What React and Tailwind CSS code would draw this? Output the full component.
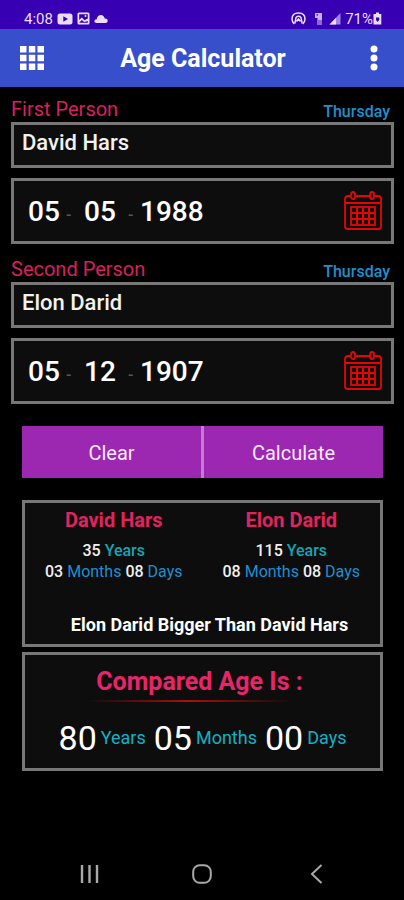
import { useState } from "react";

const emptyPerson = { name: "", day: "", month: "", year: "" };

function CalendarIcon() {
  return (
    <svg viewBox="0 0 38 40" className="w-[38px] h-10" fill="none" stroke="#e30606" strokeWidth="1.8">
      <path d="M6 5H4Q1 5 1 8V35Q1 38 4 38H34Q37 38 37 35V8Q37 5 34 5H31M12 5H26M1 12H37" />
      <rect x="7" y="1" width="4" height="7" rx="2" />
      <rect x="26" y="1" width="4" height="7" rx="2" />
      <rect x="7" y="16" width="24" height="18" />
      <path strokeWidth="2.2" d="M7 22H31M7 28H31M13 16V34M19 16V34M25 16V34" />
    </svg>
  );
}

function StatusBar() {
  return (
    <div className="flex items-center justify-between h-[29px] pt-2 pl-6 pr-[22px] bg-[#3700b3] text-[#e9defa]">
      <div className="flex items-center gap-1">
        <span className="text-[15px] leading-5">4:08</span>
        <svg viewBox="0 0 16 12" className="w-4 h-3" fill="currentColor">
          <path fillRule="evenodd" d="M3 .5H13Q15.5.5 15.5 3V9Q15.5 11.5 13 11.5H3Q.5 11.5.5 9V3Q.5.5 3 .5ZM6.3 3.3V8.7L11 6Z" />
        </svg>
        <svg viewBox="0 0 13 13" className="w-[13px] h-[13px]" fill="currentColor">
          <path fillRule="evenodd" d="M2 .5H11Q12.5.5 12.5 2V11Q12.5 12.5 11 12.5H2Q.5 12.5.5 11V2Q.5.5 2 .5ZM2.2 2.2V8L4.8 5.5L7.5 8.3L10.8 6.5V2.2ZM2.2 10.8H10.8V9L7.2 10L4.8 8Z" />
          <circle cx="8.5" cy="4" r="1" />
        </svg>
        <svg viewBox="0 0 14 10" className="w-[14px] h-[10px]" fill="currentColor">
          <path d="M2.5 9Q.3 9 .3 7.2T2.7 5.2Q3.5 1 7 1Q9.8 1 10.7 4.6Q13.7 4.6 13.7 7Q13.7 9 11.5 9Z" />
        </svg>
      </div>
      <div className="flex items-center">
        <svg viewBox="0 0 15 13" className="w-[15px] h-[13px] mr-2" fill="none" stroke="currentColor" strokeWidth="1.5">
          <path d="M3.2 11.8Q1 10 1 7Q1 1 7.5 1T14 7Q14 10 11.8 11.8" />
          <path d="M3.8 11.5L5 5.5Q7.5 3 10 5.5L11.2 11.5M5.5 9.5L7.5 7L9.5 9.5" />
        </svg>
        <svg viewBox="0 0 9 14" className="w-[9px] h-[14px] mr-1.5 opacity-80" fill="currentColor">
          <path fillRule="evenodd" d="M1 1H8V8H3.5V6H1ZM2.5 2.3V3.4H4V2.3Z" />
          <path d="M3 8H8V13H3Z" opacity=".6" />
        </svg>
        <svg viewBox="0 0 12 13" className="w-3 h-[13px] mr-1" fill="currentColor">
          <path d="M.5 12.5L11.5 1V12.5Z" opacity=".6" />
          <path d="M.5 12.5L7 5.7V12.5Z" />
        </svg>
        <span className="text-[15px] leading-5">71%</span>
        <svg viewBox="0 0 9 13" className="w-[9px] h-[13px]" fill="currentColor">
          <path fillRule="evenodd" d="M3 .5H6V2H8.3V12.5H.5V2H3ZM3 5.5V8L4.5 10L6.3 8V5.5Z" />
        </svg>
      </div>
    </div>
  );
}

function Header() {
  return (
    <header className="flex items-center justify-between h-[58px] pl-5 pr-[18px] bg-[#384fcb] text-white">
      <button aria-label="Apps">
        <svg viewBox="0 0 24 24" className="w-6 h-6" fill="currentColor">
          <path d="M0 0H6.5V6.5H0ZM8.8 0H15.3V6.5H8.8ZM17.5 0H24V6.5H17.5ZM0 8.8H6.5V15.3H0ZM8.8 8.8H15.3V15.3H8.8ZM17.5 8.8H24V15.3H17.5ZM0 17.5H6.5V24H0ZM8.8 17.5H15.3V24H8.8ZM17.5 17.5H24V24H17.5Z" />
        </svg>
      </button>
      <h1 className="pt-0.5 text-[25px] font-bold">Age Calculator</h1>
      <button aria-label="More options" className="w-6 flex justify-center">
        <svg viewBox="0 0 8 26" className="w-2 h-[26px]" fill="currentColor">
          <circle cx="4" cy="4" r="3.5" />
          <circle cx="4" cy="13" r="3.5" />
          <circle cx="4" cy="22" r="3.5" />
        </svg>
      </button>
    </header>
  );
}

function PersonForm({ id, label, weekday, person, onChange }) {
  const update = (field) => (e) => onChange({ ...person, [field]: e.target.value });

  return (
    <section>
      <div className="flex items-end justify-between pr-1 h-[27px]">
        <label htmlFor={`${id}-name`} className="text-xl leading-[26px] text-[#d81f5f]">{label}</label>
        <span className="text-base leading-5 font-medium text-[#1f8fd0]">{weekday}</span>
      </div>
      <input
        id={`${id}-name`}
        value={person.name}
        onChange={update("name")}
        className="block w-full h-[46px] px-2 pb-1.5 border-3 border-[#777] bg-[#0d0d0d] text-[22px] font-medium text-[#f2f2f2] focus:outline-none"
      />
      <div className="flex items-center h-[66px] mt-[10px] pl-[14px] pr-[9px] border-3 border-[#777] bg-[#0d0d0d] text-[28px] font-medium text-white">
        <input aria-label={`${label} day`} value={person.day} onChange={update("day")} maxLength={2} className="w-9 pt-0.5 focus:outline-none" />
        <span className="w-5 pt-2 pl-0.5 text-base text-[#555]">-</span>
        <input aria-label={`${label} month`} value={person.month} onChange={update("month")} maxLength={2} className="w-10 pt-0.5 focus:outline-none" />
        <span className="w-4 pt-2 pl-1 text-base text-[#555]">-</span>
        <input aria-label={`${label} year`} value={person.year} onChange={update("year")} maxLength={4} className="w-20 pt-0.5 focus:outline-none" />
        <button aria-label={`Pick date for ${label}`} className="ml-auto">
          <CalendarIcon />
        </button>
      </div>
    </section>
  );
}

function AgeColumn({ name, years, months, days }) {
  return (
    <div className="flex-1 text-center text-base leading-[21px] text-[#f0f0f0]">
      <h2 className="text-xl leading-7 mb-1.5 font-bold text-[#e0245f]">{name}</h2>
      <p className="font-medium">{years} <span className="text-[#12a5b8]">Years</span></p>
      <p>
        <span className="font-medium">{months}</span> <span className="text-[#1f8fd0]">Months</span>
        <span className="ml-1 font-medium">{days}</span> <span className="text-[#1f8fd0]">Days</span>
      </p>
    </div>
  );
}

function AgePart({ value, unit }) {
  return (
    <span className="flex items-center gap-1">
      <span className="text-[34px] leading-10 text-white">{value}</span>
      <span className="text-lg text-[#14b0c6]">{unit}</span>
    </span>
  );
}

function App() {
  const [first, setFirst] = useState({ name: "David Hars", day: "05", month: "05", year: "1988" });
  const [second, setSecond] = useState({ name: "Elon Darid", day: "05", month: "12", year: "1907" });

  const handleClear = () => {
    setFirst(emptyPerson);
    setSecond(emptyPerson);
  };

  return (
    <div className="min-h-screen flex flex-col bg-black font-[Roboto,sans-serif]">
      <StatusBar />
      <Header />

      <main className="flex-1 pt-2 pl-[11px] pr-[10px]">
        <div className="flex flex-col gap-[11px]">
          <PersonForm id="first" label="First Person" weekday="Thursday" person={first} onChange={setFirst} />
          <PersonForm id="second" label="Second Person" weekday="Thursday" person={second} onChange={setSecond} />
        </div>

        <div className="px-[11px]">
          <div className="flex mt-[22px] h-[52px] bg-[#9c27b0] text-xl text-[#fbe9ff]">
            <button onClick={handleClear} className="flex-1 pt-0.5">Clear</button>
            <div className="w-[3px] bg-[#c57bd2]" />
            <button className="flex-1 pt-0.5">Calculate</button>
          </div>

          {/* Ages */}
          <div className="mt-[22px] h-[147px] pt-[3px] border-3 border-[#777] bg-[#0d0d0d]">
            <div className="flex">
              <AgeColumn name="David Hars" years="35" months="03" days="08" />
              <AgeColumn name="Elon Darid" years="115" months="08" days="08" />
            </div>
            <p className="mt-[29px] pl-3.5 text-center text-lg font-bold text-white">Elon Darid Bigger Than David Hars</p>
          </div>

          {/* Difference */}
          <div className="mt-[5px] h-[119px] pt-[9px] border-3 border-[#777] bg-[#0d0d0d]">
            <h2 className="pr-1.5 text-center text-[25px] leading-9 font-bold text-[#ea2469]">Compared Age Is :</h2>
            <div className="ml-[60px] w-[208px] h-0.5 bg-linear-to-r from-transparent via-[#b00d0d] to-transparent" />
            <div className="flex justify-center gap-2 mt-4">
              <AgePart value="80" unit="Years" />
              <AgePart value="05" unit="Months" />
              <AgePart value="00" unit="Days" />
            </div>
          </div>
        </div>
      </main>

      <nav className="flex items-center justify-around h-[52px] px-8 text-[#a8a8a8]">
        <button aria-label="Recent apps">
          <svg viewBox="0 0 20 20" className="w-5 h-5" stroke="currentColor" strokeWidth="2.4">
            <path d="M3 1V19M10.5 1V19M18 1V19" />
          </svg>
        </button>
        <button aria-label="Home">
          <svg viewBox="0 0 20 20" className="w-5 h-5" fill="none" stroke="currentColor" strokeWidth="2">
            <rect x="1.2" y="1.2" width="17.6" height="17.6" rx="6.5" />
          </svg>
        </button>
        <button aria-label="Back">
          <svg viewBox="0 0 20 20" className="w-5 h-5" fill="none" stroke="currentColor" strokeWidth="2">
            <path d="M16.5 1L7 10L16.5 19" />
          </svg>
        </button>
      </nav>
    </div>
  );
}

export default App;
